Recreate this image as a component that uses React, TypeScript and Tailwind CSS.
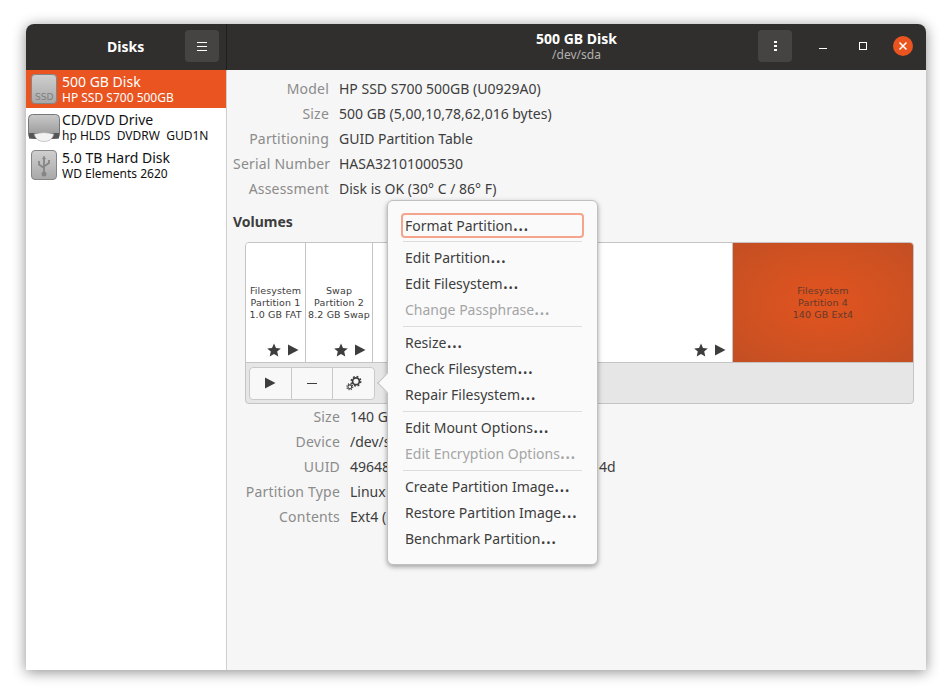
const infoRows = [
  ['Model', 'HP SSD S700 500GB (U0929A0)'],
  ['Size', '500 GB (5,00,10,78,62,016 bytes)'],
  ['Partitioning', 'GUID Partition Table'],
  ['Serial Number', 'HASA32101000530'],
  ['Assessment', 'Disk is OK (30° C / 86° F)'],
];

// the rest of these values sits behind the open menu
const partRows = [
  ['Size', '140 G'],
  ['Device', '/dev/s'],
  ['UUID', '49648'],
  ['Partition Type', 'Linux'],
  ['Contents', 'Ext4 ('],
];

const menuGroups = [
  [['Format Partition', 'focus']],
  [['Edit Partition'], ['Edit Filesystem'], ['Change Passphrase', 'off']],
  [['Resize'], ['Check Filesystem'], ['Repair Filesystem']],
  [['Edit Mount Options'], ['Edit Encryption Options', 'off']],
  [['Create Partition Image'], ['Restore Partition Image'], ['Benchmark Partition']],
];

function Star() {
  return (
    <svg width="14" height="14" viewBox="0 0 14 14" className="fill-[#3d3d3d]">
      <polygon points="7,0.5 9,5 13.8,5.4 10.2,8.6 11.3,13.4 7,10.9 2.7,13.4 3.8,8.6 0.2,5.4 5,5" />
    </svg>
  );
}

function Play({ size = 12 }: { size?: number }) {
  return (
    <svg width={size} height={size} viewBox="0 0 12 12" className="fill-[#3d3d3d]">
      <polygon points="1,0.5 11.5,6 1,11.5" />
    </svg>
  );
}

function Flags() {
  return (
    <div className="absolute right-[6px] bottom-[5px] flex items-center gap-[6px]">
      <Star />
      <Play />
    </div>
  );
}

function Part({ lines, flags, className }: { lines: string[]; flags?: boolean; className: string }) {
  return (
    <div className={`relative flex items-center justify-center text-center font-['DejaVu_Sans',sans-serif] text-[9.5px] leading-[12px] tracking-[0.1px] ${className}`}>
      <div>
        {lines.map(l => <div key={l} className="whitespace-nowrap">{l}</div>)}
      </div>
      {flags && <Flags />}
    </div>
  );
}

function DiskIcon({ kind }: { kind: string }) {
  if (kind === 'cd') {
    return (
      <svg width="32" height="28" viewBox="0 0 32 28" className="mt-px shrink-0">
        <defs>
          <linearGradient id="cdg" x1="0" y1="0" x2="0" y2="1">
            <stop offset="0" stopColor="#c9c9c9" />
            <stop offset="1" stopColor="#939393" />
          </linearGradient>
        </defs>
        <rect x="0.5" y="0.5" width="31" height="24" rx="4" fill="url(#cdg)" stroke="#777" />
        <rect x="1" y="19" width="30" height="5.5" fill="#555" />
        <path d="M6 20 Q16 17 26 20 Q24 27.500 16 27.500 Q8 27.500 6 20Z" fill="#f2f2f2" stroke="#999" strokeWidth="0.5" />
      </svg>
    );
  }
  return (
    <svg width="26" height="30" viewBox="0 0 26 30" className="shrink-0">
      <defs>
        <linearGradient id={`g${kind}`} x1="0" y1="0" x2="0" y2="1">
          <stop offset="0" stopColor="#cfcfcf" />
          <stop offset="1" stopColor="#a8a8a8" />
        </linearGradient>
      </defs>
      <rect x="0.5" y="0.5" width="25" height="29" rx="3.5" fill={`url(#g${kind})`} stroke="#858585" />
      {kind === 'usb' && (
        <g fill="none" stroke="#868686" strokeWidth="1.8">
          <path d="M13 8v15M8 11v3.500l5 3.500M18 10v3l-5 3.500" />
          <circle cx="13" cy="24" r="1.6" fill="#868686" />
          <path d="M11.500 9L13 6l1.500 3z" fill="#868686" strokeWidth="0.6" />
        </g>
      )}
    </svg>
  );
}

function Cogs() {
  return (
    <svg width="16" height="16" viewBox="0 0 16 16" fill="none" stroke="#3d3d3d">
      <circle cx="10" cy="6.200" r="3.400" strokeWidth="1.700" />
      <circle cx="10" cy="6.200" r="4.700" strokeWidth="1.600" strokeDasharray="1.850 1.840" />
      <circle cx="3.800" cy="11.800" r="1.900" strokeWidth="1.100" />
      <circle cx="3.800" cy="11.800" r="3" strokeWidth="1.100" strokeDasharray="1.200 1.160" />
    </svg>
  );
}

function InfoGrid({ rows, labelW, className, uuidTail }: { rows: string[][]; labelW: string; className: string; uuidTail?: string }) {
  return (
    <div className={`flex flex-col ${className}`}>
      {rows.map(([k, v]) => (
        <div key={k} className="flex h-[25px] items-center gap-[10px] whitespace-nowrap">
          <div className={`text-right tracking-[0.2px] text-[#8b8b8b] ${labelW}`}>{k}</div>
          <div className="text-[#3d3d3d]">
            {v}
            {uuidTail && k === 'UUID' && <span className="ml-[209px]">{uuidTail}</span>}
          </div>
        </div>
      ))}
    </div>
  );
}

export default function App() {
  return (
    <div className="h-[699px] w-[952px] overflow-hidden bg-white pl-[26px] pt-[24px] font-['Noto_Sans',sans-serif] text-[14px]">
      <div className="relative flex h-[646px] w-[900px] flex-col overflow-hidden rounded-t-[8px] bg-[#f6f6f6] shadow-[0_2px_14px_rgba(0,0,0,0.45)]">
        {/* header */}
        <div className="flex h-[46px] shrink-0 bg-[#302f2e] text-white">
          <div className="flex w-[201px] shrink-0 items-center border-r border-[#1f1e1e] pb-[2px] pl-[81px] pr-[7px]">
            <div className="font-bold">Disks</div>
            <button className="ml-auto flex h-[32px] w-[34px] flex-col items-center justify-center gap-[3px] rounded-[4px] bg-[#454442]">
              <span className="h-px w-[10px] bg-white" />
              <span className="h-px w-[10px] bg-white" />
              <span className="h-px w-[10px] bg-white" />
            </button>
          </div>
          <div className="relative flex flex-1 flex-col items-center justify-center pb-[2px]">
            <div className="text-[14px] leading-[17px] font-bold">500 GB Disk</div>
            <div className="text-[12px] leading-[15px] text-[#b3b1ae]">/dev/sda</div>
            <div className="absolute top-[6px] right-[13px] flex items-center">
              <button className="flex h-[32px] w-[34px] flex-col items-center justify-center gap-[2px] rounded-[4px] bg-[#454442]">
                <span className="h-[2px] w-[3px] bg-white" />
                <span className="h-[2px] w-[3px] bg-white" />
                <span className="h-[2px] w-[3px] bg-white" />
              </button>
              <div className="ml-[23px] flex h-[32px] w-[16px] items-center justify-center">
                <span className="mt-[4px] h-px w-[8px] bg-white" />
              </div>
              <div className="ml-[24px] flex h-[32px] w-[16px] items-center justify-center">
                <span className="h-[8px] w-[8px] border border-white" />
              </div>
              <div className="ml-[22px] flex h-[20px] w-[20px] items-center justify-center rounded-full bg-[#e95420]">
                <svg width="10" height="10" viewBox="0 0 10 10" stroke="white" strokeWidth="1.5">
                  <path d="M1.5 1.5l7 7M8.500 1.500l-7 7" />
                </svg>
              </div>
            </div>
          </div>
        </div>
        {/* body */}
        <div className="flex min-h-0 flex-1">
          <div className="w-[201px] shrink-0 border-r border-[#cfcfcf] bg-white">
            {[
              ['500 GB Disk', 'HP SSD S700 500GB', 'ssd', true],
              ['CD/DVD Drive', 'hp HLDS  DVDRW  GUD1N', 'cd', false],
              ['5.0 TB Hard Disk', 'WD Elements 2620', 'usb', false],
            ].map(([t, s, kind, sel]) => (
              <div key={t as string} className={`flex h-[38px] items-center ${sel ? 'bg-[#e95420] text-white' : 'text-[#111]'}`}>
                <div className="relative flex w-[36px] shrink-0 justify-center">
                  <DiskIcon kind={kind as string} />
                  {kind === 'ssd' && (
                    <span className="absolute bottom-[1px] left-[9px] font-['DejaVu_Sans',sans-serif] text-[9px] leading-[12px] text-[#808080]">SSD</span>
                  )}
                </div>
                <div className="whitespace-pre">
                  <div className="text-[14px] leading-[18px]">{t as string}</div>
                  <div className="text-[12px] leading-[14px]">{s as string}</div>
                </div>
              </div>
            ))}
          </div>
          <div className="relative min-w-0 flex-1">
            <InfoGrid rows={infoRows} labelW="w-[96px]" className="ml-[6px] mt-[6px]" />
            <div className="ml-[6px] mt-[11px] h-[20px] leading-[20px] font-bold text-[#3d3d3d]">Volumes</div>
            <div className="ml-[18px] mt-[10px] w-[669px] overflow-hidden rounded-[4px] border border-[#c4c4c4] bg-[#e6e6e6] text-[#3d3d3d]">
              <div className="flex h-[120px] border-b border-[#c4c4c4] bg-white">
                <Part lines={['Filesystem', 'Partition 1', '1.0 GB FAT']} flags className="w-[60px] border-r border-[#c4c4c4]" />
                <Part lines={['Swap', 'Partition 2', '8.2 GB Swap']} flags className="w-[67px] border-r border-[#c4c4c4]" />
                <div className="relative w-[360px] border-r border-[#c4c4c4]"><Flags /></div>
                <Part
                  lines={['Filesystem', 'Partition 4', '140 GB Ext4']}
                  className="flex-1 bg-[radial-gradient(ellipse_at_center,#e2541f_0%,#c34f23_100%)] text-[#643a2a]"
                />
              </div>
              <div className="flex h-[40px] items-center pl-[3px]">
                <div className="flex h-[33px] w-[126px] rounded-[4px] border border-[#c9c9c9] bg-[#f8f8f8]">
                  <div className="flex flex-1 items-center justify-center border-r border-[#c9c9c9]"><Play /></div>
                  <div className="flex flex-1 items-center justify-center border-r border-[#c9c9c9]"><span className="h-px w-[10px] bg-[#3d3d3d]" /></div>
                  <div className="flex flex-1 items-center justify-center"><Cogs /></div>
                </div>
              </div>
            </div>
            <InfoGrid rows={partRows} labelW="w-[95px]" uuidTail="4d" className="ml-[18px]" />
          </div>
        </div>

        {/* partition menu */}
        <div className="absolute left-[361px] top-[176px] w-[211px] rounded-[6px] border border-[#c0c0c0] bg-[#fafafa] px-[13px] py-[12px] text-[#3d3d3d] shadow-[0_2px_5px_rgba(0,0,0,0.35)]">
          <span className="absolute top-[175px] left-[-8px] h-[14px] w-[14px] rotate-45 border-b border-l border-[#c0c0c0] bg-[#fafafa]" />
          {menuGroups.map((group, i) => (
            <div key={i} className="relative">
              {i > 0 && <div className="mx-[2px] my-[3px] h-px bg-[#dddddd]" />}
              {group.map(([label, state]) => (
                <div
                  key={label}
                  className={`flex items-center whitespace-nowrap pb-[2px] pl-[4px] ${state === 'off' ? 'text-[#a5a5a5]' : ''} ${state === 'focus' ? 'mb-px h-[25px] rounded-[4px] outline-2 -outline-offset-2 outline-[#f4a58c]' : 'h-[26px]'}`}
                >
                  <span>{label}<span className="text-[20px] leading-none">…</span></span>
                </div>
              ))}
            </div>
          ))}
        </div>
      </div>
    </div>
  );
}
